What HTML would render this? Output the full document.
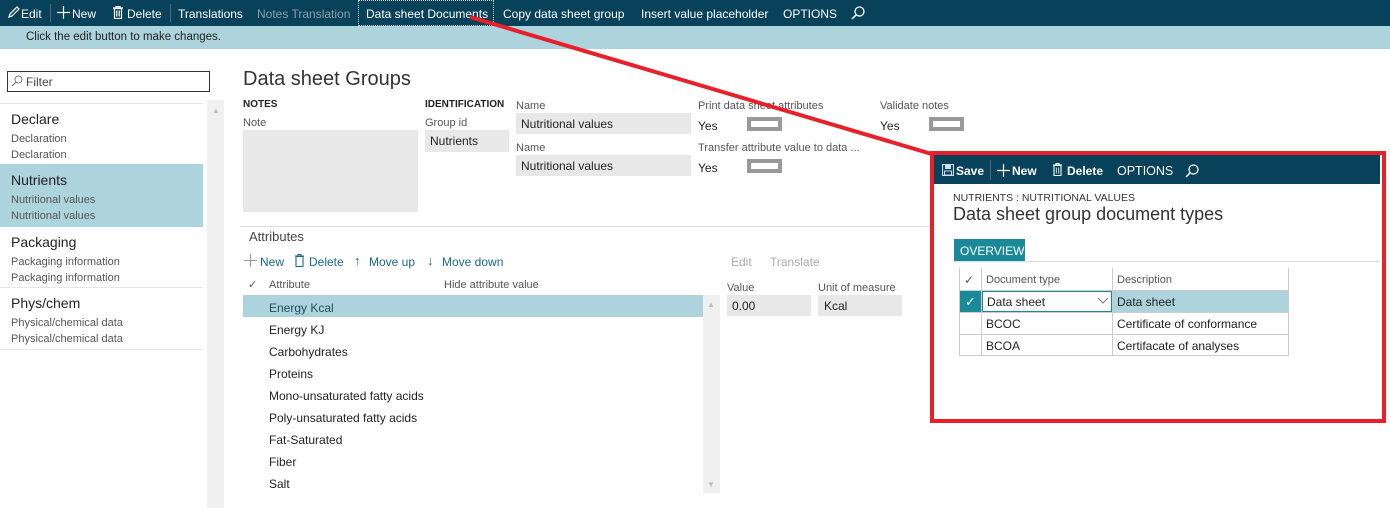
<!DOCTYPE html>
<html><head><meta charset="utf-8"><style>
*{box-sizing:border-box;margin:0;padding:0}
body{width:1390px;height:508px;position:relative;overflow:hidden;background:#fff;font-family:"Liberation Sans",sans-serif;color:#222;font-size:12px}
.a{position:absolute;white-space:nowrap}
.tb{background:#07415a;color:#fff;font-size:13px}
.gr{color:#555}
.in{background:#e8e8e8}
.w{color:#fff;font-size:12px}
.tog{position:absolute;width:35px;height:14px;background:#999;}
.tog::after{content:"";position:absolute;left:4px;top:4px;width:27px;height:6px;background:#fff}
</style></head><body>
<div class="a tb" style="left:0;top:0;width:1390px;height:26px"></div>
<div class="a" style="left:0;top:26px;width:1390px;height:23px;background:#add3dc"></div>
<div class="a" style="left:26px;top:31px;font-size:11.5px;color:#222">Click the edit button to make changes.</div>
<svg class="a" style="left:7px;top:6px" width="13" height="13"><path d="M2 11 L3 8 L10 1 L12 3 L5 10 Z" fill="none" stroke="#fff" stroke-width="1.2"/></svg>
<div class="a w" style="left:21px;top:7px">Edit</div>
<div class="a" style="left:50px;top:4px;width:1px;height:18px;background:#567"></div>
<svg class="a" style="left:57px;top:6px" width="13" height="13"><path d="M6.5 0V13M0 6.5H13" stroke="#fff" stroke-width="1.2"/></svg>
<div class="a w" style="left:72px;top:7px">New</div>
<svg class="a" style="left:112px;top:6px" width="12" height="13"><path d="M1 2H11M4 2V0.5H8V2M2.5 2.5V12.5H9.5V2.5Z" fill="none" stroke="#fff" stroke-width="1.2"/><path d="M4.5 4.5V10.5M6 4.5V10.5M7.5 4.5V10.5" stroke="#fff" stroke-width="0.8"/></svg>
<div class="a w" style="left:127px;top:7px">Delete</div>
<div class="a" style="left:170px;top:4px;width:1px;height:18px;background:#567"></div>
<div class="a w" style="left:178px;top:7px">Translations</div>
<div class="a" style="left:257px;top:7px;color:#8aa0ab;font-size:12px">Notes Translation</div>
<div class="a" style="left:358px;top:0;width:136px;height:26px;border:1px dotted #ccc"></div>
<div class="a w" style="left:366px;top:7px">Data sheet Documents</div>
<div class="a w" style="left:503px;top:7px">Copy data sheet group</div>
<div class="a w" style="left:641px;top:7px">Insert value placeholder</div>
<div class="a w" style="left:783px;top:7px">OPTIONS</div>
<svg class="a" style="left:850px;top:5px" width="16" height="16"><circle cx="9.5" cy="6.5" r="4.5" fill="none" stroke="#fff" stroke-width="1.3"/><line x1="6.3" y1="9.7" x2="2" y2="14" stroke="#fff" stroke-width="1.5"/></svg>

<!-- left -->
<div class="a" style="left:7px;top:71px;width:203px;height:21px;border:1px solid #333"></div>
<svg class="a" style="left:11px;top:75px" width="12" height="12"><circle cx="7.5" cy="4.5" r="3.5" fill="none" stroke="#777" stroke-width="1"/><line x1="5" y1="7" x2="1" y2="11" stroke="#777" stroke-width="1.2"/></svg>
<div class="a" style="left:26px;top:75px;font-size:12px;color:#444">Filter</div>
<div class="a" style="left:207px;top:100px;width:17px;height:408px;background:#f0f0f0"></div>
<div class="a" style="left:212px;top:106px;font-size:8px;color:#bbb">▲</div>
<div class="a" style="left:0;top:103px;width:203px;height:1px;background:#e6e6e6"></div>
<div class="a" style="left:11px;top:111px;font-size:14px">Declare</div>
<div class="a gr" style="left:11px;top:133px;font-size:11px">Declaration</div>
<div class="a gr" style="left:11px;top:149px;font-size:11px">Declaration</div>
<div class="a" style="left:0;top:164px;width:203px;height:63px;background:#add3dc"></div>
<div class="a" style="left:11px;top:172px;font-size:14px">Nutrients</div>
<div class="a gr" style="left:11px;top:194px;font-size:11px">Nutritional values</div>
<div class="a gr" style="left:11px;top:210px;font-size:11px">Nutritional values</div>
<div class="a" style="left:11px;top:234px;font-size:14px">Packaging</div>
<div class="a gr" style="left:11px;top:256px;font-size:11px">Packaging information</div>
<div class="a gr" style="left:11px;top:272px;font-size:11px">Packaging information</div>
<div class="a" style="left:0;top:287px;width:203px;height:1px;background:#e6e6e6"></div>
<div class="a" style="left:11px;top:295px;font-size:14px">Phys/chem</div>
<div class="a gr" style="left:11px;top:317px;font-size:11px">Physical/chemical data</div>
<div class="a gr" style="left:11px;top:333px;font-size:11px">Physical/chemical data</div>
<div class="a" style="left:0;top:349px;width:203px;height:1px;background:#e6e6e6"></div>

<!-- main -->
<div class="a" style="left:243px;top:68px;font-size:20px;color:#333">Data sheet Groups</div>
<div class="a" style="left:243px;top:99px;font-size:10px;font-weight:bold">NOTES</div>
<div class="a gr" style="left:243px;top:117px;font-size:11px">Note</div>
<div class="a in" style="left:243px;top:130px;width:175px;height:82px"></div>
<div class="a" style="left:425px;top:99px;font-size:10px;font-weight:bold">IDENTIFICATION</div>
<div class="a gr" style="left:425px;top:117px;font-size:11px">Group id</div>
<div class="a in" style="left:425px;top:130px;width:84px;height:22px"></div>
<div class="a" style="left:430px;top:134px">Nutrients</div>
<div class="a gr" style="left:516px;top:100px;font-size:11px">Name</div>
<div class="a in" style="left:516px;top:113px;width:175px;height:21px"></div>
<div class="a" style="left:521px;top:117px">Nutritional values</div>
<div class="a gr" style="left:516px;top:142px;font-size:11px">Name</div>
<div class="a in" style="left:516px;top:155px;width:175px;height:21px"></div>
<div class="a" style="left:521px;top:159px">Nutritional values</div>
<div class="a gr" style="left:698px;top:100px;font-size:11px">Print data sheet attributes</div>
<div class="a" style="left:698px;top:119px">Yes</div>
<div class="tog" style="left:747px;top:117px"></div>
<div class="a gr" style="left:698px;top:142px;font-size:11px">Transfer attribute value to data ...</div>
<div class="a" style="left:698px;top:161px">Yes</div>
<div class="tog" style="left:747px;top:159px"></div>
<div class="a gr" style="left:880px;top:100px;font-size:11px">Validate notes</div>
<div class="a" style="left:880px;top:119px">Yes</div>
<div class="tog" style="left:929px;top:117px"></div>

<div class="a" style="left:240px;top:226px;width:700px;height:1px;background:#ddd"></div>
<div class="a" style="left:249px;top:229px;font-size:13px;color:#444">Attributes</div>
<svg class="a" style="left:244px;top:254px" width="13" height="13"><path d="M6.5 0V13M0 6.5H13" stroke="#999" stroke-width="1.1"/></svg>
<div class="a" style="left:260px;top:255px;color:#1a6a80">New</div>
<svg class="a" style="left:294px;top:254px" width="11" height="13"><path d="M1 2H10M4 2V0.5H7V2M2 2.5V12.5H9V2.5Z" fill="none" stroke="#1a6a80" stroke-width="1.1"/></svg>
<div class="a" style="left:309px;top:255px;color:#1a6a80">Delete</div>
<div class="a" style="left:354px;top:253px;color:#1a6a80;font-size:13px">↑</div>
<div class="a" style="left:369px;top:255px;color:#1a6a80">Move up</div>
<div class="a" style="left:427px;top:253px;color:#1a6a80;font-size:13px">↓</div>
<div class="a" style="left:442px;top:255px;color:#1a6a80">Move down</div>
<div class="a" style="left:731px;top:255px;color:#aaa">Edit</div>
<div class="a" style="left:770px;top:255px;color:#aaa">Translate</div>
<div class="a gr" style="left:248px;top:278px;font-size:11px">✓</div>
<div class="a gr" style="left:269px;top:279px;font-size:11px">Attribute</div>
<div class="a gr" style="left:444px;top:279px;font-size:11px">Hide attribute value</div>
<div class="a" style="left:243px;top:295px;width:460px;height:22px;background:#add3dc"></div>
<div class="a" style="left:703px;top:295px;width:17px;height:198px;background:#f0f0f0"></div>
<div class="a" style="left:707px;top:300px;font-size:8px;color:#bbb">▲</div>
<div class="a" style="left:707px;top:480px;font-size:8px;color:#bbb">▼</div>
<div class="a" style="left:269px;top:301px;color:#1e4e5e">Energy Kcal</div>
<div class="a" style="left:269px;top:323px">Energy KJ</div>
<div class="a" style="left:269px;top:345px">Carbohydrates</div>
<div class="a" style="left:269px;top:367px">Proteins</div>
<div class="a" style="left:269px;top:389px">Mono-unsaturated fatty acids</div>
<div class="a" style="left:269px;top:411px">Poly-unsaturated fatty acids</div>
<div class="a" style="left:269px;top:433px">Fat-Saturated</div>
<div class="a" style="left:269px;top:455px">Fiber</div>
<div class="a" style="left:269px;top:477px">Salt</div>
<div class="a gr" style="left:727px;top:282px;font-size:11px">Value</div>
<div class="a in" style="left:727px;top:295px;width:84px;height:21px"></div>
<div class="a" style="left:732px;top:299px">0.00</div>
<div class="a gr" style="left:818px;top:282px;font-size:11px">Unit of measure</div>
<div class="a in" style="left:818px;top:295px;width:84px;height:21px"></div>
<div class="a" style="left:824px;top:299px">Kcal</div>

<!-- red line -->
<svg class="a" style="left:0;top:0" width="1390" height="508"><line x1="470" y1="17" x2="935" y2="155" stroke="#e8202a" stroke-width="4"/></svg>

<!-- dialog -->
<div class="a" style="left:930px;top:151px;width:456px;height:272px;border:4px solid #e8202a;background:#fff"></div>
<div class="a tb" style="left:934px;top:155px;width:446px;height:29px"></div>
<svg class="a" style="left:942px;top:164px" width="12" height="12"><rect x="0.5" y="0.5" width="11" height="11" fill="none" stroke="#cde" stroke-width="1.2"/><rect x="3" y="1" width="6" height="4" fill="#cde"/><rect x="2.5" y="7" width="7" height="4" fill="none" stroke="#cde"/></svg>
<div class="a w" style="left:956px;top:164px;font-weight:bold">Save</div>
<div class="a" style="left:990px;top:160px;width:1px;height:20px;background:#567"></div>
<svg class="a" style="left:997px;top:164px" width="13" height="13"><path d="M6.5 0V13M0 6.5H13" stroke="#fff" stroke-width="1.2"/></svg>
<div class="a w" style="left:1012px;top:164px;font-weight:bold">New</div>
<svg class="a" style="left:1052px;top:163px" width="11" height="13"><path d="M1 2H10M4 2V0.5H7V2M2 2.5V12.5H9V2.5Z" fill="none" stroke="#fff" stroke-width="1.1"/><path d="M4.3 4.5V10.5M6.7 4.5V10.5" stroke="#fff" stroke-width="0.8"/></svg>
<div class="a w" style="left:1067px;top:164px;font-weight:bold">Delete</div>
<div class="a w" style="left:1117px;top:164px;font-size:12.5px">OPTIONS</div>
<svg class="a" style="left:1184px;top:163px" width="16" height="16"><circle cx="9.5" cy="6.5" r="4.5" fill="none" stroke="#fff" stroke-width="1.3"/><line x1="6.3" y1="9.7" x2="2" y2="14" stroke="#fff" stroke-width="1.5"/></svg>
<div class="a" style="left:953px;top:192px;font-size:10.5px;color:#333">NUTRIENTS : NUTRITIONAL VALUES</div>
<div class="a" style="left:953px;top:204px;font-size:18px;color:#333">Data sheet group document types</div>
<div class="a" style="left:954px;top:239px;width:71px;height:23px;background:#1a8a9a;color:#fff;font-size:12px;padding:5px 0 0 6px">OVERVIEW</div>
<div class="a" style="left:954px;top:261px;width:426px;height:1px;background:#ddd"></div>
<div class="a" style="left:959px;top:268px;width:330px;height:88px;border:1px solid #ccc;border-top:none"></div>
<div class="a" style="left:981px;top:268px;width:1px;height:88px;background:#ccc"></div>
<div class="a" style="left:1112px;top:268px;width:1px;height:88px;background:#ccc"></div>
<div class="a" style="left:959px;top:290px;width:330px;height:1px;background:#ccc"></div>
<div class="a" style="left:959px;top:312px;width:330px;height:1px;background:#ccc"></div>
<div class="a" style="left:959px;top:334px;width:330px;height:1px;background:#ccc"></div>
<div class="a gr" style="left:964px;top:273px">✓</div>
<div class="a gr" style="left:986px;top:274px;font-size:11px">Document type</div>
<div class="a gr" style="left:1117px;top:274px;font-size:11px">Description</div>
<div class="a" style="left:960px;top:291px;width:21px;height:21px;background:#1a8a9a;color:#fff;text-align:center;padding-top:3px;font-size:13px">✓</div>
<div class="a" style="left:982px;top:291px;width:130px;height:21px;border:1px solid #1a8a9a"></div>
<div class="a" style="left:987px;top:295px">Data sheet</div>
<svg class="a" style="left:1097px;top:297px" width="12" height="8"><path d="M1 1L6 6L11 1" fill="none" stroke="#777" stroke-width="1"/></svg>
<div class="a" style="left:1113px;top:291px;width:175px;height:21px;background:#add3dc"></div>
<div class="a" style="left:1117px;top:295px">Data sheet</div>
<div class="a" style="left:986px;top:317px">BCOC</div>
<div class="a" style="left:1117px;top:317px">Certificate of conformance</div>
<div class="a" style="left:986px;top:339px">BCOA</div>
<div class="a" style="left:1117px;top:339px">Certifacate of analyses</div>
</body></html>
